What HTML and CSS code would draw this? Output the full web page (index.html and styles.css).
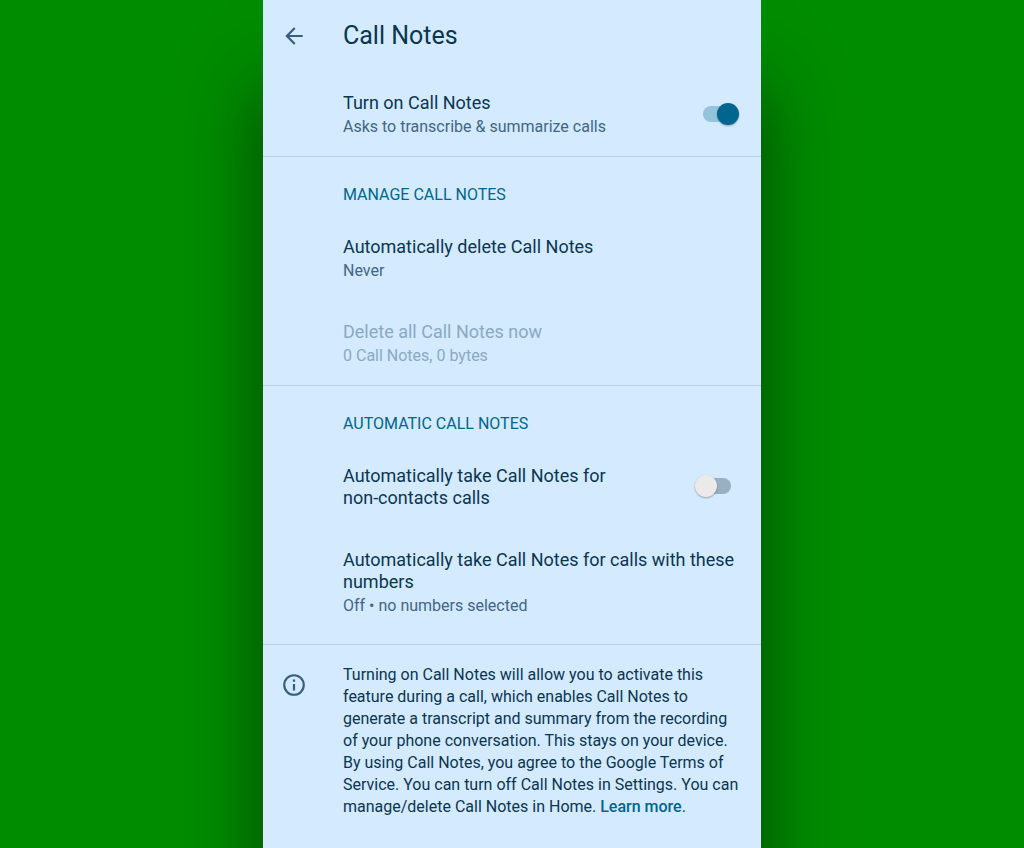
FILE: index.html
```html
<!doctype html>
<html lang="en">
<head>
    <meta charset="UTF-8">
    <meta name="viewport" content="width=device-width, initial-scale=1.0">
    <title>Call Notes</title>
    <link rel="stylesheet" href="styles.css">
</head>
<body>

<main class="screen">
    <header class="topbar">
        <button class="back" type="button" aria-label="Back">
            <svg class="icon" viewBox="0 0 24 24">
                <path d="M20 11H7.8l5.6-5.6L12 4l-8 8 8 8 1.4-1.4L7.8 13H20z"/>
            </svg>
        </button>
        <h1>Call Notes</h1>
    </header>

    <section class="group">
        <div class="row">
            <label class="text" for="call-notes">
                <span class="title">Turn on Call Notes</span>
                <span class="sub">Asks to transcribe &amp; summarize calls</span>
            </label>
            <input class="switch" id="call-notes" type="checkbox" checked>
        </div>
    </section>

    <section class="group">
        <h2>MANAGE CALL NOTES</h2>
        <div class="row">
            <div class="text">
                <span class="title">Automatically delete Call Notes</span>
                <span class="sub">Never</span>
            </div>
        </div>
        <div class="row disabled">
            <div class="text">
                <span class="title">Delete all Call Notes now</span>
                <span class="sub">0 Call Notes, 0 bytes</span>
            </div>
        </div>
    </section>

    <section class="group last">
        <h2>AUTOMATIC CALL NOTES</h2>
        <div class="row">
            <label class="text" for="non-contacts">
                <span class="title">Automatically take Call Notes for<br>non-contacts calls</span>
            </label>
            <input class="switch" id="non-contacts" type="checkbox">
        </div>
        <div class="row">
            <div class="text">
                <span class="title">Automatically take Call Notes for calls with these<br>numbers</span>
                <span class="sub">Off • no numbers selected</span>
            </div>
        </div>
    </section>

    <footer class="info">
        <svg class="icon" viewBox="0 0 24 24">
            <path d="M11 17h2v-6h-2zM12 2a10 10 0 1 0 0 20 10 10 0 0 0 0-20zm0 18a8 8 0 1 1 0-16 8 8 0 0 1 0 16zM11 9h2V7h-2z"/>
        </svg>
        <p>
            Turning on Call Notes will allow you to activate this<br>
            feature during a call, which enables Call Notes to<br>
            generate a transcript and summary from the recording<br>
            of your phone conversation. This stays on your device.<br>
            By using Call Notes, you agree to the Google Terms of<br>
            Service. You can turn off Call Notes in Settings. You can<br>
            manage/delete Call Notes in Home. <a href="#">Learn more</a>.
        </p>
    </footer>
</main>

</body>
</html>
```
FILE: styles.css
```css
* {
    box-sizing: border-box;
}
body {
    margin: 0;
    background: #008c00;
    color: #0b3650;
    font-family: Roboto, "Liberation Sans", sans-serif;
    font-size: 16px;
    overflow-x: hidden;
}
h1, h2, p {
    margin: 0;
    font-weight: 400;
}

.screen {
    max-width: 498px;
    min-height: 100vh;
    margin: 0 auto;
    background: #d3eaff;
    box-shadow: 0 88px 70px rgba(0, 0, 0, 0.5);
}
.icon {
    display: block;
    width: 26px;
    height: 26px;
    fill: #365f7d;
}

.topbar {
    display: flex;
    align-items: center;
    height: 71px;
    padding-left: 18px;
}
.topbar h1 {
    font-size: 25px;
    line-height: 32px;
}
.back {
    width: 62px;
    padding: 0;
    border: 0;
    background: none;
}

.group {
    border-bottom: 1px solid #b9d1e7;
}
.group h2 {
    padding: 26px 22px 8px 80px;
    color: #00668a;
    font-size: 16px;
    line-height: 24px;
}
.last {
    padding-bottom: 9px;
}
.row {
    display: flex;
    align-items: center;
    padding: 21px 22px 19px 80px;
}
.text {
    flex: 1;
    white-space: nowrap;
}
.title {
    display: block;
    font-size: 18px;
    line-height: 22px;
}
.sub {
    display: block;
    margin-top: 3px;
    color: #426783;
    font-size: 16px;
    line-height: 20px;
}
.disabled .title,
.disabled .sub {
    color: #8ba9c2;
}

.switch {
    position: relative;
    appearance: none;
    flex: none;
    width: 44px;
    height: 24px;
    margin: 0;
}
.switch::before {
    content: "";
    position: absolute;
    top: 3px;
    left: 8px;
    width: 28px;
    height: 16px;
    border-radius: 8px;
    background: #9bafc3;
}
.switch::after {
    content: "";
    position: absolute;
    top: 0;
    left: 0;
    width: 22px;
    height: 22px;
    border-radius: 50%;
    background: #ece9e9;
    box-shadow: 0 1px 2px rgba(0, 0, 0, 0.3);
}
.switch:checked::before {
    background: #94c4dc;
}
.switch:checked::after {
    left: 22px;
    background: #00668f;
}

.info {
    display: flex;
    gap: 36px;
    padding: 19px 20px 28px 18px;
}
.info .icon {
    flex: none;
    margin-top: 8px;
}
.info p {
    line-height: 22px;
    white-space: nowrap;
}
.info a {
    color: #00668a;
    font-weight: 500;
    text-decoration: none;
}
```
